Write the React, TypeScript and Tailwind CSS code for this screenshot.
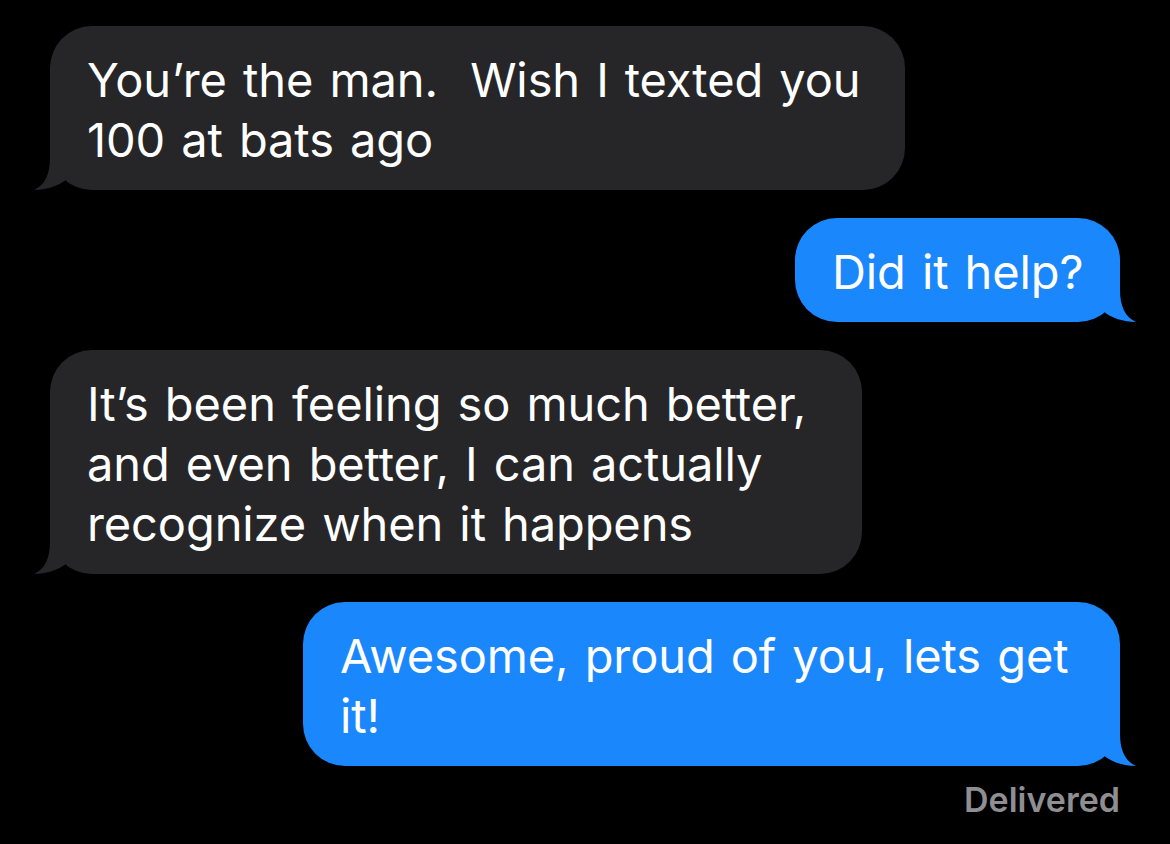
function Tail({ color, side }: { color: string; side: 'left' | 'right' }) {
  return (
    <svg
      width="72"
      height="46"
      viewBox="0 0 72 46"
      className={
        side === 'left'
          ? 'absolute bottom-0 left-[-18px]'
          : 'absolute bottom-0 right-[-18px] scale-x-[-1]'
      }
    >
      <path
        d="M18 0 L18 14 C18 30 13 41 2 46 C14 46 27 42 35 35 C42 42 54 46 72 46 L72 0 Z"
        fill={color}
      />
    </svg>
  );
}

function Bubble({
  lines,
  side,
  width,
}: {
  lines: string[];
  side: 'left' | 'right';
  width: string;
}) {
  const color = side === 'left' ? '#262629' : '#1b87fd';
  return (
    <div
      className={`relative rounded-[42px] pt-[24px] pb-[20px] pl-[37px] ${width} ${
        side === 'left' ? 'self-start bg-[#262629]' : 'self-end bg-[#1b87fd]'
      }`}
    >
      <Tail color={color} side={side} />
      <div className="relative whitespace-pre text-[47px] leading-[60px] text-white tracking-[-0.1px] [word-spacing:3px]">
        {lines.join('\n')}
      </div>
    </div>
  );
}

export default function App() {
  return (
    <div className="h-[844px] w-[1170px] overflow-hidden bg-black font-['Inter','Roboto',sans-serif]">
      <div className="flex flex-col gap-[28px] px-[50px] pt-[26px]">
        <Bubble
          side="left"
          width="w-[855px]"
          lines={['You’re the man.  Wish I texted you', '100 at bats ago']}
        />
        <Bubble side="right" width="w-[325px]" lines={['Did it help?']} />
        <Bubble
          side="left"
          width="w-[812px]"
          lines={[
            'It’s been feeling so much better,',
            'and even better, I can actually',
            'recognize when it happens',
          ]}
        />
        <div className="flex flex-col">
          <Bubble
            side="right"
            width="w-[817px]"
            lines={['Awesome, proud of you, lets get', 'it!']}
          />
          <div className="mt-[14px] self-end text-[34px] font-semibold leading-[40px] text-[#8e8e93]">
            Delivered
          </div>
        </div>
      </div>
    </div>
  );
}
